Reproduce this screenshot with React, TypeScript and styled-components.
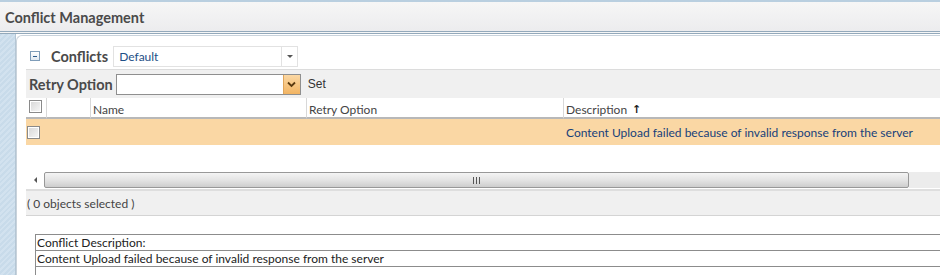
import React from "react";
import styled, { createGlobalStyle } from "styled-components";

const GlobalStyle = createGlobalStyle`
  html, body {
    margin: 0;
    padding: 0;
    background: #ffffff;
    overflow: hidden;
  }
  body {
    font-family: Lato, "Noto Sans", Arial, sans-serif;
    color: #333;
  }
`;

const Page = styled.div`
  width: 940px;
  height: 275px;
  display: flex;
  flex-direction: column;
  overflow: hidden;
  background: #fff;
`;

const TitleBar = styled.div`
  height: 28px;
  flex: none;
  display: flex;
  align-items: center;
  padding: 1px 0 0 5px;
  box-sizing: content-box;
  border-top: 2px solid #b9cfe0;
  border-bottom: 3px double #93a9bb;
  background: linear-gradient(#f6f6f6, #ececee);
  font-size: 14.5px;
  font-weight: 700;
  color: #4a4a4a;
`;

const Body = styled.div`
  flex: 1;
  display: flex;
  min-height: 0;
`;

const LeftRail = styled.div`
  width: 15px;
  flex: none;
  background: repeating-linear-gradient(
    135deg,
    #c8dbea 0px,
    #c8dbea 2px,
    #d2e2ef 2px,
    #d2e2ef 4px
  );
  border-right: 1px solid #b4c6d4;
`;

const Panel = styled.div`
  flex: 1;
  margin-top: 1px;
  border-top: 1px solid #c9d3dc;
  border-left: 1px solid #c9d3dc;
  border-top-left-radius: 6px;
  background: #fff;
  padding: 9px 0 0 9px;
  display: flex;
  flex-direction: column;
  min-width: 0;
`;

const ConflictsRow = styled.div`
  height: 22px;
  flex: none;
  display: flex;
  align-items: center;
  padding-left: 4px;
`;

const CollapseBox = styled.span`
  width: 8px;
  height: 8px;
  border: 1px solid #7f9db9;
  background: linear-gradient(#fff, #dfe8f1);
  display: inline-flex;
  align-items: center;
  justify-content: center;
  margin-right: 11px;
  &::after {
    content: "";
    width: 4px;
    height: 1px;
    background: #2c5a8a;
  }
`;

const GroupLabel = styled.span`
  font-size: 14.5px;
  font-weight: 700;
  color: #4a4a4a;
  margin-right: 5px;
`;

const Combo = styled.div<{ $width: number }>`
  width: ${(p) => p.$width}px;
  height: 21px;
  box-sizing: border-box;
  border: 1px solid #e2e2e2;
  background: #fff;
  display: flex;
  align-items: center;
`;

const ComboText = styled.span`
  flex: 1;
  padding-left: 5px;
  font-size: 12px;
  color: #1d4f86;
`;

const ComboArrow = styled.span`
  width: 15px;
  height: 100%;
  border-left: 1px solid #e2e2e2;
  display: flex;
  align-items: center;
  justify-content: center;
  &::after {
    content: "";
    border-left: 3px solid transparent;
    border-right: 3px solid transparent;
    border-top: 3px solid #555;
  }
`;

const RetryBar = styled.div`
  margin-top: 2px;
  height: 28px;
  flex: none;
  background: #f0f0f0;
  border-top: 1px solid #dcdcdc;
  display: flex;
  align-items: center;
  padding-left: 3px;
`;

const RetryLabel = styled.span`
  font-size: 14.5px;
  font-weight: 700;
  color: #4a4a4a;
  margin-right: 3px;
`;

const SelectBox = styled.div`
  width: 185px;
  height: 21px;
  box-sizing: border-box;
  border: 1px solid #8f8f8f;
  background: #fff;
  display: flex;
  justify-content: flex-end;
`;

const SelectButton = styled.span`
  width: 16px;
  height: 100%;
  background: linear-gradient(#fbd8a4, #f2b462);
  border-left: 1px solid #e0a55a;
  display: flex;
  align-items: center;
  justify-content: center;
`;

const SetLabel = styled.span`
  margin-left: 7px;
  font-size: 12px;
  color: #333;
  font-family: "Liberation Sans", Arial, sans-serif;
`;

const Grid = styled.div`
  flex: none;
  display: grid;
  grid-template-columns: 20px 44px 216px 257px 1fr;
`;

const HeadCell = styled.div<{ $sep?: boolean }>`
  height: 21px;
  box-sizing: border-box;
  background: #fff;
  border-bottom: 2px solid #b8b8b8;
  border-left: ${(p) => (p.$sep ? "1px solid #d8d8d8" : "none")};
  display: flex;
  align-items: center;
  padding: 3px 0 0 2px;
  font-size: 12px;
  color: #444;
`;

const RowCell = styled.div<{ $indent?: number }>`
  height: 26px;
  background: #fad7a4;
  display: flex;
  align-items: center;
  padding-left: ${(p) => p.$indent ?? 0}px;
  font-size: 12px;
  color: #17417a;
  white-space: nowrap;
`;

const CheckBox = styled.span`
  width: 11px;
  height: 11px;
  border: 1px solid #8a8a8a;
  background: linear-gradient(135deg, #d6d6d6, #f8f8f8);
  box-shadow: inset 0 0 0 1px #fff;
  margin-left: 1px;
`;

const HeadCheck = styled(CheckBox)`
  margin-top: -5px;
`;

const SortArrow = styled.span`
  margin-left: 5px;
  font-family: "DejaVu Sans", sans-serif;
  font-size: 11px;
  font-weight: 700;
  color: #222;
`;

const ScrollRow = styled.div`
  margin-top: 27px;
  height: 16px;
  flex: none;
  display: flex;
  align-items: stretch;
`;

const ScrollButton = styled.span`
  width: 18px;
  display: flex;
  align-items: center;
  justify-content: center;
  background: #fff;
  &::after {
    content: "";
    border-top: 3px solid transparent;
    border-bottom: 3px solid transparent;
    border-right: 3px solid #555;
  }
`;

const ScrollThumb = styled.div`
  width: 865px;
  flex: none;
  box-sizing: border-box;
  border: 1px solid #989898;
  border-radius: 2px;
  background: linear-gradient(#f4f4f4, #e2e2e2 55%, #cdcdcd);
  display: flex;
  align-items: center;
  justify-content: center;
`;

const Grip = styled.span`
  width: 7px;
  height: 7px;
  background: repeating-linear-gradient(
    90deg,
    #555 0px,
    #555 1px,
    transparent 1px,
    transparent 3px
  );
`;

const ScrollRest = styled.div`
  flex: 1;
  background: #ececec;
`;

const StatusBar = styled.div`
  margin-top: 1px;
  height: 24px;
  flex: none;
  border-top: 2px solid #dedede;
  border-bottom: 1px solid #d4d4d4;
  background: #f0f0f0;
  display: flex;
  align-items: center;
  padding-left: 1px;
  font-size: 12px;
  color: #444;
`;

const DescBox = styled.div`
  margin-top: 18px;
  margin-left: 9px;
  border: 1px solid #8c8c8c;
  border-right: none;
  border-bottom: none;
  display: flex;
  flex-direction: column;
  font-size: 12px;
  color: #222;
  flex: 1;
`;

const DescLine = styled.div`
  height: 16px;
  box-sizing: border-box;
  border-bottom: 1px solid #8c8c8c;
  display: flex;
  align-items: center;
  padding-left: 1px;
  white-space: nowrap;
`;

const message =
  "Content Upload failed because of invalid response from the server";

export default function App() {
  return (
    <Page>
      <GlobalStyle />
      <TitleBar>Conflict Management</TitleBar>
      <Body>
        <LeftRail />
        <Panel>
          <ConflictsRow>
            <CollapseBox />
            <GroupLabel>Conflicts</GroupLabel>
            <Combo $width={185}>
              <ComboText>Default</ComboText>
              <ComboArrow />
            </Combo>
          </ConflictsRow>
          <RetryBar>
            <RetryLabel>Retry Option</RetryLabel>
            <SelectBox>
              <SelectButton>
                <svg width="9" height="7" viewBox="0 0 9 7">
                  <path
                    d="M1 1.5 L4.5 5 L8 1.5"
                    fill="none"
                    stroke="#5a3a10"
                    strokeWidth="1.8"
                  />
                </svg>
              </SelectButton>
            </SelectBox>
            <SetLabel>Set</SetLabel>
          </RetryBar>
          <Grid>
            <HeadCell>
              <HeadCheck />
            </HeadCell>
            <HeadCell $sep />
            <HeadCell $sep>Name</HeadCell>
            <HeadCell $sep>Retry Option</HeadCell>
            <HeadCell $sep>
              Description<SortArrow>↑</SortArrow>
            </HeadCell>
            <RowCell>
              <CheckBox />
            </RowCell>
            <RowCell />
            <RowCell />
            <RowCell />
            <RowCell $indent={3}>{message}</RowCell>
          </Grid>
          <ScrollRow>
            <ScrollButton />
            <ScrollThumb>
              <Grip />
            </ScrollThumb>
            <ScrollRest />
          </ScrollRow>
          <StatusBar>( 0 objects selected )</StatusBar>
          <DescBox>
            <DescLine>Conflict Description:</DescLine>
            <DescLine>{message}</DescLine>
          </DescBox>
        </Panel>
      </Body>
    </Page>
  );
}
